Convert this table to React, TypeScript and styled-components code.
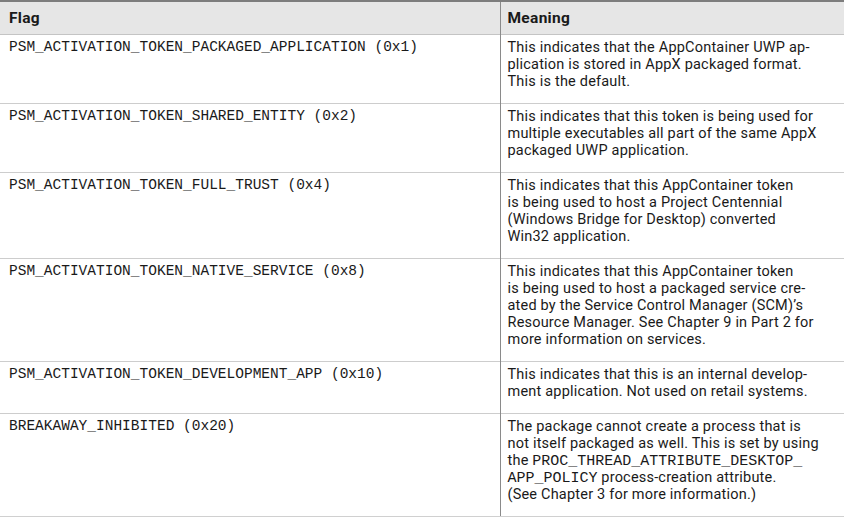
import React from "react";
import styled, { createGlobalStyle } from "styled-components";

const Global = createGlobalStyle`
  html, body { margin: 0; padding: 0; background: #ffffff; }
  body { font-family: Roboto, "Liberation Sans", sans-serif; color: #1a1a1a; }
`;

const Table = styled.table`
  width: 844px;
  border-collapse: collapse;
  table-layout: fixed;
  border-top: 2px solid #7d7d7d;
  border-bottom: 2px solid #d0d0d0;
`;

const HeadRow = styled.tr`
  background: #e6e6e6;
  border-bottom: 1px solid #c4c4c4;
`;

const HeadCell = styled.th<{ $first?: boolean }>`
  height: 32px;
  padding: 0 8px 0 ${(p) => (p.$first ? "9px" : "7px")};
  text-align: left;
  font-family: Roboto, "Liberation Sans", sans-serif;
  font-weight: 700;
  font-size: 15.5px;
  letter-spacing: 0.3px;
  color: #1a1a1a;
  border-left: ${(p) => (p.$first ? "none" : "1px solid #8a8a8a")};
`;

const Row = styled.tr`
  border-bottom: 1px solid #cdcdcd;
  &:last-child { border-bottom: none; }
`;

const FlagCell = styled.td`
  vertical-align: top;
  padding: 4px 8px 13px 9px;
  font-family: "Liberation Mono", "DejaVu Sans Mono", monospace;
  font-size: 14.5px;
  line-height: 17px;
  color: #1a1a1a;
  white-space: nowrap;
`;

const MeaningCell = styled.td`
  vertical-align: top;
  padding: 4px 2px 13px 7px;
  border-left: 1px solid #8a8a8a;
  font-family: Roboto, "Liberation Sans", sans-serif;
  font-size: 14.5px;
  letter-spacing: 0.2px;
  line-height: 17px;
  color: #1a1a1a;
`;

const Line = styled.span`
  display: block;
  height: 17px;
  white-space: nowrap;
`;

const Code = styled.span`
  font-family: "Liberation Mono", "DejaVu Sans Mono", monospace;
  font-size: 15px;
  letter-spacing: 0;
  line-height: 17px;
`;

type Entry = { flag: string; lines: React.ReactNode[] };

const entries: Entry[] = [
  {
    flag: "PSM_ACTIVATION_TOKEN_PACKAGED_APPLICATION (0x1)",
    lines: [
      "This indicates that the AppContainer UWP ap-",
      "plication is stored in AppX packaged format.",
      "This is the default.",
    ],
  },
  {
    flag: "PSM_ACTIVATION_TOKEN_SHARED_ENTITY (0x2)",
    lines: [
      "This indicates that this token is being used for",
      "multiple executables all part of the same AppX",
      "packaged UWP application.",
    ],
  },
  {
    flag: "PSM_ACTIVATION_TOKEN_FULL_TRUST (0x4)",
    lines: [
      "This indicates that this AppContainer token",
      "is being used to host a Project Centennial",
      "(Windows Bridge for Desktop) converted",
      "Win32 application.",
    ],
  },
  {
    flag: "PSM_ACTIVATION_TOKEN_NATIVE_SERVICE (0x8)",
    lines: [
      "This indicates that this AppContainer token",
      "is being used to host a packaged service cre-",
      "ated by the Service Control Manager (SCM)\u2019s",
      "Resource Manager. See Chapter 9 in Part 2 for",
      "more information on services.",
    ],
  },
  {
    flag: "PSM_ACTIVATION_TOKEN_DEVELOPMENT_APP (0x10)",
    lines: [
      "This indicates that this is an internal develop-",
      "ment application. Not used on retail systems.",
    ],
  },
  {
    flag: "BREAKAWAY_INHIBITED (0x20)",
    lines: [
      "The package cannot create a process that is",
      "not itself packaged as well. This is set by using",
      <>
        the <Code>PROC_THREAD_ATTRIBUTE_DESKTOP_</Code>
      </>,
      <>
        <Code>APP_POLICY</Code> process-creation attribute.
      </>,
      "(See Chapter 3 for more information.)",
    ],
  },
];

export default function App() {
  return (
    <>
      <Global />
      <Table>
        <colgroup>
          <col style={{ width: 500 }} />
          <col />
        </colgroup>
        <thead>
          <HeadRow>
            <HeadCell $first>Flag</HeadCell>
            <HeadCell>Meaning</HeadCell>
          </HeadRow>
        </thead>
        <tbody>
          {entries.map((e) => (
            <Row key={e.flag}>
              <FlagCell>{e.flag}</FlagCell>
              <MeaningCell>
                {e.lines.map((l, i) => (
                  <Line key={i}>{l}</Line>
                ))}
              </MeaningCell>
            </Row>
          ))}
        </tbody>
      </Table>
    </>
  );
}
